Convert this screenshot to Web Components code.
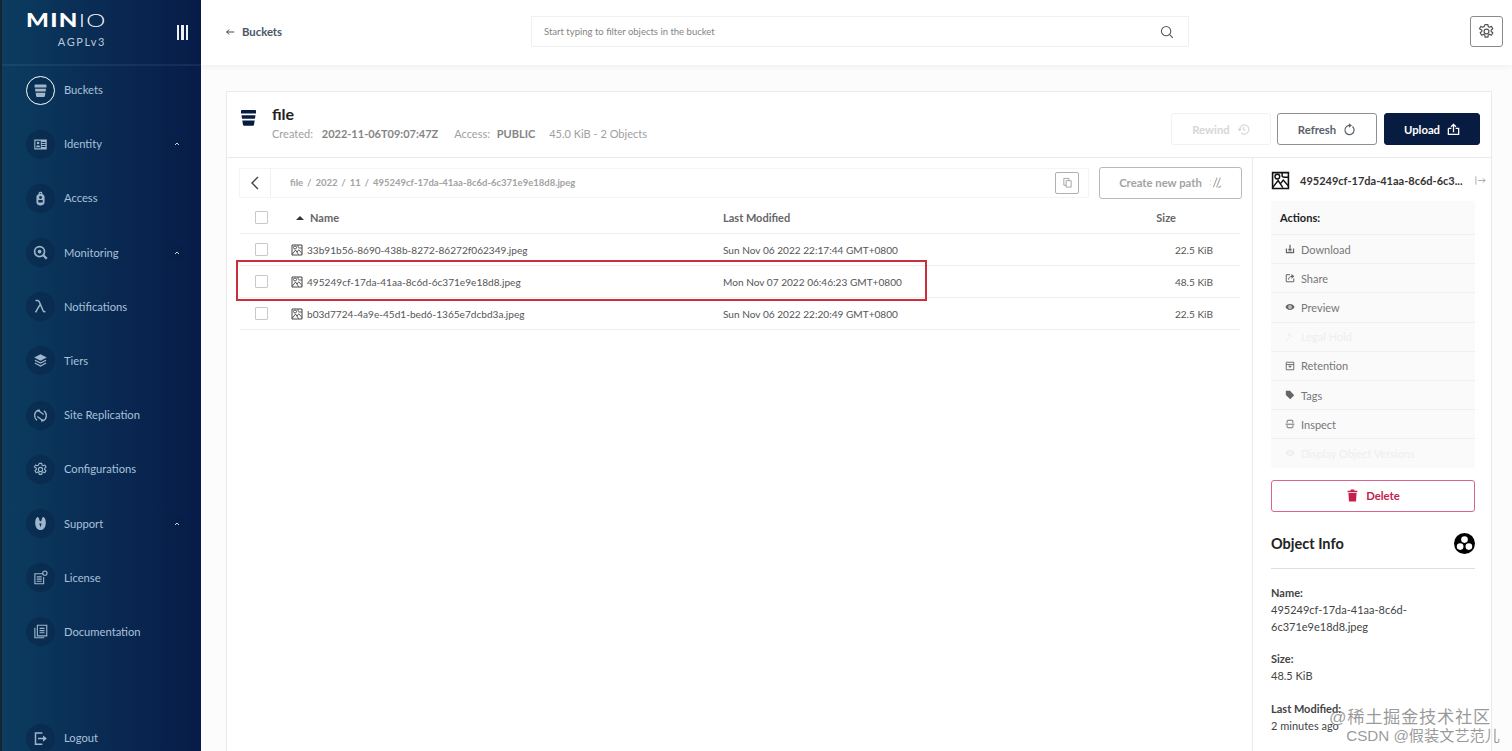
<!DOCTYPE html>
<html lang="en">
<head>
<meta charset="utf-8">
<title>MinIO Console</title>
<style>
  html, body { margin: 0; height: 100%; overflow: hidden; }
  body { font-family: Lato, "Noto Sans", sans-serif; }
</style>
</head>
<body>
<console-app></console-app>

<script>
// shared icons, all on a 24x24 box and drawn with currentColor
const ICONS = {
  bucket: '<path fill="currentColor" d="M3.5 2.500h17c.6 0 1 .4 1 1V7H2.500V3.500c0-.6.4-1 1-1zM3.200 9h17.600l-.6 4.700H3.800zM4.200 15.700h15.600l-.8 5c-.2 1-1 1.800-2 1.800H7c-1 0-1.800-.8-2-1.800z"/>',
  identity: '<path fill="currentColor" fill-rule="evenodd" d="M2 4h20v16H2zM3.800 6v12h8.700V6zM14 8v1.600h6V8zM14 11.200v1.600h6v-1.600zM14 14.400V16h6v-1.600z"/><circle cx="8.100" cy="9.500" r="2.100" fill="currentColor"/><path fill="currentColor" d="M4.800 16.500c0-2.300 1.500-3.500 3.300-3.500s3.300 1.200 3.300 3.500z"/>',
  access: '<path fill="currentColor" fill-rule="evenodd" d="M9 5V3.500C9 2 10.300 1 12 1s3 1 3 2.500V5c2 .5 3.500 2 3.500 4v9c0 2.800-2.500 5-6.500 5s-6.500-2.200-6.500-5V9c0-2 1.500-3.500 3.500-4zM11 3.800v.9h2v-.9c0-.5-2-.5-2 0zM12 8a2.300 2.300 0 100 4.600A2.300 2.300 0 0012 8zM8.500 14.500v4h7v-4z"/>',
  monitoring: '<g fill="none" stroke="currentColor" stroke-width="2.600"><circle cx="10.500" cy="10.500" r="8"/><path d="M16.500 16.500L22 22" stroke-width="3.600"/></g><circle cx="10.500" cy="10.500" r="3" fill="currentColor"/>',
  lambda: '<path fill="none" stroke="currentColor" stroke-width="2.400" d="M4 2.500h3.500c1.500 0 2 .7 2.700 2.300L16 18.500c.7 1.500 1.500 2 4 1.700M11 9.500L4 21.500"/>',
  tiers: '<path fill="currentColor" d="M12 2l10 5.200-10 5.200L2 7.200z"/><path fill="none" stroke="currentColor" stroke-width="2" d="M3 11.500l9 4.700 9-4.700M3 16l9 4.700 9-4.700"/>',
  replication: '<g fill="none" stroke="currentColor" stroke-width="2"><path d="M6.500 19.500A9.500 9.500 0 0 1 8 3.300"/><path d="M17.500 4.500a9.500 9.500 0 0 1-1.500 16.200"/><path d="M8 3.500l9 7M16 20.500l-9-7"/></g><path fill="currentColor" d="M10 1l1.500 5-5-.5zM14 23l-1.500-5 5 .5z"/>',
  gear: '<g fill="none" stroke="currentColor" stroke-width="1.700" stroke-linejoin="round"><circle cx="12" cy="12" r="3.400"/><path d="M10 2.200h4l.5 2.900 1.700.9 2.700-1.200 2 3.400-2.300 1.800v2l2.300 1.800-2 3.400-2.700-1.200-1.700.9-.5 2.900h-4l-.5-2.900-1.700-.9-2.700 1.200-2-3.400 2.300-1.800v-2L2.100 8.200l2-3.400 2.700 1.200 1.700-.9z"/></g>',
  support: '<path fill="currentColor" d="M7 1.500c1.500 0 2.500 1 3 4l1 3h2l1-3c.5-3 1.500-4 3-4 2.500 1.500 3.500 5 3.500 9.500 0 6-3.500 11.500-8.500 11.500S3.500 17 3.500 11C3.500 6.500 4.500 3 7 1.500z"/><path fill="#0a2f56" d="M10 12l2 6 2-6z"/>',
  license: '<g fill="none" stroke="currentColor" stroke-width="1.800"><path d="M16 6H3v16h14V11"/><path d="M6 11h8M6 14.500h8M6 18h8"/><circle cx="19" cy="5" r="3.400"/></g>',
  docs: '<g fill="none" stroke="currentColor" stroke-width="1.800"><path d="M7 2h15v17H7z"/><path d="M3 6v16h15"/><path d="M10.500 7h8M10.500 10.500h8M10.500 14h8"/></g>',
  logout: '<g fill="none" stroke="currentColor" stroke-width="2.400"><path d="M15 3H4v18h11"/><path d="M8 12h13"/></g><path fill="currentColor" d="M16 7l6 5-6 5z"/>',
  chevron: '<path fill="none" stroke="currentColor" stroke-width="3" d="M6 15l6-6 6 6"/>',
  search: '<g fill="none" stroke="currentColor" stroke-width="1.800"><circle cx="10.500" cy="10.500" r="8"/><path d="M16.500 16.500L22 22"/></g>',
  image: '<path fill="none" stroke="currentColor" stroke-width="2" d="M2 2h20v20H2z"/><circle cx="8" cy="7" r="3" fill="none" stroke="currentColor" stroke-width="1.800"/><path fill="none" stroke="currentColor" stroke-width="1.800" d="M2 21l7-9 6 9M12 16l3.500-4.500L22 19M14 2v3.500c0 1.500 1 2.500 3 2.500h5"/>',
  back: '<path fill="none" stroke="currentColor" stroke-width="2" d="M22 12H4M10 6l-6 6 6 6"/>',
  undo: '<path fill="none" stroke="currentColor" stroke-width="2" d="M5 12a8.500 8.500 0 1 1 3 6.500M12 7.500V12l3.500 2"/><path fill="currentColor" d="M1 10.500h8L5 15.500z"/>',
  refresh: '<path fill="none" stroke="currentColor" stroke-width="2.200" d="M17.500 6.500a8.500 8.500 0 1 1-6-2"/><path fill="currentColor" d="M11 .5l5.500 4.200L11 8.800z"/>',
  upload: '<path fill="none" stroke="currentColor" stroke-width="2.400" d="M2.500 10v11h19V10H16M8 10H2.500M12 17V3M7.500 7L12 2.500 16.500 7"/>',
  copy: '<g fill="none" stroke="currentColor" stroke-width="2"><path d="M4 3h11v15H4z"/><path d="M9 8h11v14H9z" fill="#fff"/></g>',
  newpath: '<path fill="none" stroke="currentColor" stroke-width="2" d="M2 9h1M2 16h1M8 21L15 3M14 21L21 3M17 21c2 0 4-1 5-3"/>',
  expand: '<path fill="none" stroke="currentColor" stroke-width="1.500" d="M2 3v18M7 12h15M17 7l5 5-5 5"/>',
  download: '<path fill="currentColor" d="M2 11h3v8h4v-8h1.500v8h3v-8H15v8h4v-8h3v11H2z"/><path fill="currentColor" d="M10.500 2h3v10H17l-5 5-5-5h3.500z"/>',
  share: '<path fill="none" stroke="currentColor" stroke-width="2.400" d="M21 13v8H3V4h9"/><path fill="none" stroke="currentColor" stroke-width="2.400" d="M8.500 16c0-5 3-8 9-8"/><path fill="currentColor" d="M15.500 2.500l7 5.500-7 5.500z"/>',
  eye: '<path fill="currentColor" fill-rule="evenodd" d="M12 5c5 0 9 3 11 7-2 4-6 7-11 7S3 16 1 12c2-4 6-7 11-7zm0 3a4 4 0 100 8 4 4 0 000-8z"/><circle cx="12" cy="12" r="2" fill="currentColor"/>',
  gavel: '<path fill="currentColor" d="M9 2l8 8-3 3-8-8zM11 14l-7 7-2-2 7-7z"/>',
  retention: '<path fill="none" stroke="currentColor" stroke-width="2.200" d="M3 3h18v18H3zM3 8.500h18"/><path fill="currentColor" d="M7.500 11.500h9L12 17z"/>',
  tag: '<path fill="currentColor" d="M2 2h10l10 10.500L12.500 22 2 12z"/>',
  inspect: '<path fill="none" stroke="currentColor" stroke-width="2.200" d="M5 10V5c0-1 1-2 2-2h10c1 0 2 1 2 2v5M5 15v4c0 1 1 2 2 2h10c1 0 2-1 2-2v-4M1.500 12.500h21"/>',
  trash: '<path fill="currentColor" d="M9 1h6l1 2h5v3H3V3h5zM4.500 7.500h15L18.500 23h-13z"/>',
  shares: '<circle cx="12" cy="12" r="12" fill="currentColor"/><g fill="#fff"><circle cx="12" cy="7.500" r="3.800"/><circle cx="7" cy="15.500" r="3.800"/><circle cx="17" cy="15.500" r="3.800"/></g>'
};

function icon(name, size) {
  return `<svg viewBox="0 0 24 24" width="${size}" height="${size}" aria-hidden="true">${ICONS[name]}</svg>`;
}

// one item of the left menu
class NavItem extends HTMLElement {
  connectedCallback() {
    let open = this.hasAttribute('chevron');
    this.attachShadow({mode: 'open'}).innerHTML = `
      <style>
        :host { display: flex; align-items: center; height: 30px; padding: 0 17px 0 24px; color: #a9c1da; font-size: 11.2px; }
        .disc { width: 29px; height: 29px; border-radius: 50%; background: rgba(8,32,66,.4); display: flex; align-items: center; justify-content: center; flex: none; margin-right: 9px; color: #9fb5cb; }
        :host([active]) .disc { box-sizing: border-box; border: 1.5px solid #fff; background: rgba(8,32,66,.3); color: #a3b6c9; }
        .label { flex: 1; margin-top: -1px; }
        .chev { width: 15px; height: 15px; border-radius: 50%; display: flex; align-items: center; justify-content: center; background: rgba(8,32,66,.4); color: #c8d6e3; }
      </style>
      <span class="disc">${icon(this.getAttribute('icon'), 15)}</span>
      <span class="label"><slot></slot></span>
      ${open ? `<span class="chev">${icon('chevron', 8)}</span>` : ''}
    `;
  }
}
customElements.define('nav-item', NavItem);

class SideBar extends HTMLElement {
  constructor() {
    super();
    this.attachShadow({mode: 'open'}).innerHTML = `
      <style>
        :host { display: flex; flex-direction: column; width: 201px; flex: none; height: 751px; box-sizing: border-box; overflow: hidden;
                border-left: 2px solid #16242f; background: linear-gradient(90deg, #0b3d60 0%, #0a2c54 45%, #071c48 100%); font-family: Lato, sans-serif; }
        header { height: 66px; flex: none; box-sizing: border-box; border-bottom: 2px solid rgba(90,130,170,.16); display: flex; justify-content: space-between; padding: 10px 13px 0 24px; color: #fff; }
        .logo { display: flex; flex-direction: column; width: 80px; }
        .word { font: 900 18.5px/20px Lato, sans-serif; letter-spacing: 1px; white-space: nowrap; transform: scaleX(1.3); transform-origin: left center; }
        .word span { font-weight: 300; }
        .lic { font-size: 11px; letter-spacing: 1.6px; color: #b9c8d8; text-align: right; margin-top: 5px; }
        .bars { display: flex; gap: 2px; margin-top: 15px; height: 15px; }
        .bars i { width: 2.5px; background: #eef2f6; }
        nav { display: flex; flex-direction: column; gap: 24.2px; padding-top: 9px; flex: 1; }
        ::slotted([slot=foot]) { margin-bottom: -2px; }
      </style>
      <header>
        <div class="logo">
          <div class="word">MIN<span>IO</span></div>
          <div class="lic">AGPLv3</div>
        </div>
        <div class="bars"><i></i><i></i><i></i></div>
      </header>
      <nav><slot></slot></nav>
      <slot name="foot"></slot>
    `;
  }
}
customElements.define('side-bar', SideBar);

class TopBar extends HTMLElement {
  constructor() {
    super();
    this.attachShadow({mode: 'open'}).innerHTML = `
      <style>
        :host { display: flex; align-items: center; height: 65px; flex: none; box-sizing: border-box; background: #fff; box-shadow: 0 2px 6px rgba(0,0,0,.05); padding: 0 9px 2px 24px; position: relative; }
        .back { display: flex; align-items: center; gap: 7px; width: 306px; font-size: 11.3px; font-weight: 700; color: #4a5666; flex: none; }
        .back svg { color: #222; }
        .filter { width: 658px; height: 31px; box-sizing: border-box; border: 1px solid #f0f0f0; display: flex; align-items: center; justify-content: space-between; padding: 0 14px 0 12px; font-size: 9.5px; color: #858585; }
        .filter svg { color: #555; }
        .spacer { flex: 1; }
        .gear { width: 33px; height: 31px; box-sizing: border-box; border: 1px solid #8a8a8a; border-radius: 3px; display: flex; align-items: center; justify-content: center; color: #555; }
      </style>
      <div class="back">${icon('back', 10)}<span>Buckets</span></div>
      <div class="filter"><span>Start typing to filter objects in the bucket</span>${icon('search', 14)}</div>
      <div class="spacer"></div>
      <div class="gear">${icon('gear', 17)}</div>
    `;
  }
}
customElements.define('top-bar', TopBar);

// bordered button, kind = plain | primary | faded | soft | danger
class ActionButton extends HTMLElement {
  connectedCallback() {
    this.attachShadow({mode: 'open'}).innerHTML = `
      <style>
        :host { display: flex; align-items: center; justify-content: center; gap: 7px; box-sizing: border-box; height: 32px; border: 1px solid #8f8f8f; border-radius: 3px; font-size: 11.3px; font-weight: 700; color: #59616b; background: #fff; flex: none; }
        :host([kind=primary]) { background: #081c42; border-color: #081c42; color: #fff; }
        :host([kind=faded]) { border-color: #f1f1f1; color: #d6d6d6; }
        :host([kind=soft]) { border-color: #b9b9b9; color: #a3a3a3; }
        :host([kind=danger]) { border-color: #d9658a; color: #c4214e; }
      </style>
      <span style="display:inline-flex;order:${this.hasAttribute('lead') ? 0 : 1}">${icon(this.getAttribute('icon'), +this.getAttribute('size') || 13)}</span>
      <span><slot></slot></span>
    `;
  }
}
customElements.define('action-button', ActionButton);

class BucketHeader extends HTMLElement {
  constructor() {
    super();
    this.attachShadow({mode: 'open'}).innerHTML = `
      <style>
        :host { display: flex; align-items: flex-start; height: 66px; flex: none; box-sizing: border-box; border-bottom: 1px solid #eaeaea; padding: 12px 11px 0 12px; }
        .ic { color: #081c42; width: 19px; margin: 4px 14px 0 0; display: flex; }
        .txt { flex: 1; }
        h1 { margin: 0; font-size: 16px; line-height: 20px; font-weight: 700; color: #222; }
        .meta { font-size: 11px; color: #a0a0a0; display: flex; gap: 14px; margin-top: 1px; line-height: 18px; }
        b { color: #858585; margin-left: 4px; font-weight: 700; }
        .created { margin-right: 2px; }
        .created b { margin-left: 6px; }
      </style>
      <div class="ic">${icon('bucket', 19)}</div>
      <div class="txt">
        <h1>file</h1>
        <div class="meta">
          <span class="created">Created: <b>2022-11-06T09:07:47Z</b></span>
          <span>Access: <b>PUBLIC</b></span>
          <span>45.0 KiB - 2 Objects</span>
        </div>
      </div>
      <div style="display:flex;gap:6px;margin-top:9px"><slot></slot></div>
    `;
  }
}
customElements.define('bucket-header', BucketHeader);

class PathBar extends HTMLElement {
  constructor() {
    super();
    this.attachShadow({mode: 'open'}).innerHTML = `
      <style>
        :host { display: flex; align-items: center; gap: 10px; padding: 8px 10px 0 12px; height: 41px; box-sizing: border-box; flex: none; }
        .bar { flex: 1; height: 30px; box-sizing: border-box; border: 1px solid #f4f4f4; display: flex; align-items: center; }
        .prev { width: 30px; height: 100%; border-right: 1px solid #f0f0f0; display: flex; align-items: center; justify-content: center; color: #444; flex: none; }
        .crumbs { flex: 1; padding-left: 19px; font-size: 9.5px; font-weight: 700; color: #a2a2a2; word-spacing: 1.6px; }
        .copy { width: 24px; height: 22px; box-sizing: border-box; margin-right: 9px; border: 1px solid #b0b0b0; border-radius: 2px; display: flex; align-items: center; justify-content: center; color: #a0a0a0; }
        action-button { width: 143px; }
      </style>
      <div class="bar">
        <div class="prev"><svg width="10" height="14" viewBox="0 0 10 14"><path d="M8 1L2 7l6 6" fill="none" stroke="currentColor" stroke-width="1.400"/></svg></div>
        <div class="crumbs">file / 2022 / 11 / 495249cf-17da-41aa-8c6d-6c371e9e18d8.jpeg</div>
        <div class="copy">${icon('copy', 11)}</div>
      </div>
      <action-button kind="soft" icon="newpath" size="13">Create new path</action-button>
    `;
  }
}
customElements.define('path-bar', PathBar);

const ROW_COLS = '51px 432px 1fr 130px';

class FileRow extends HTMLElement {
  connectedCallback() {
    this.attachShadow({mode: 'open'}).innerHTML = `
      <style>
        :host { display: grid; grid-template-columns: ${ROW_COLS}; align-items: center; height: 32px; box-sizing: border-box; border-bottom: 1px solid #eeeeee; font-size: 10.1px; color: #555; }
        .check { width: 13px; height: 13px; box-sizing: border-box; border: 1px solid #c8c8c8; border-radius: 1px; margin-left: 15px; background: #fff; }
        .name { display: flex; align-items: center; gap: 4px; }
        .name svg { color: #444; }
        .size { text-align: right; padding-right: 27px; }
      </style>
      <div class="check"></div>
      <div class="name">${icon('image', 12)}<span><slot></slot></span></div>
      <div>${this.getAttribute('modified')}</div>
      <div class="size">${this.getAttribute('size')}</div>
    `;
  }
}
customElements.define('file-row', FileRow);

class FileTable extends HTMLElement {
  constructor() {
    super();
    this.attachShadow({mode: 'open'}).innerHTML = `
      <style>
        :host { display: block; margin: 0 12px 0 13px; }
        .head { display: grid; grid-template-columns: ${ROW_COLS}; align-items: center; height: 35px; box-sizing: border-box; border-bottom: 1px solid #eeeeee; font-size: 11px; font-weight: 700; color: #666; padding-top: 3px; }
        .check { width: 13px; height: 13px; box-sizing: border-box; border: 1px solid #c8c8c8; border-radius: 1px; margin-left: 15px; }
        .name { display: flex; align-items: center; gap: 6px; padding-left: 5px; }
        .tri { width: 0; height: 0; border: 4px solid transparent; border-top: 0; border-bottom: 4px solid #333; }
        .size { text-align: right; padding-right: 64px; }
      </style>
      <div class="head">
        <div class="check"></div>
        <div class="name"><i class="tri"></i>Name</div>
        <div>Last Modified</div>
        <div class="size">Size</div>
      </div>
      <slot></slot>
    `;
  }
}
customElements.define('file-table', FileTable);

class ActionList extends HTMLElement {
  constructor() {
    super();
    this.attachShadow({mode: 'open'}).innerHTML = `
      <style>
        :host { display: block; background: #fafafa; border-radius: 2px; }
        .title { height: 33px; display: flex; align-items: center; padding-left: 9px; font-size: 11px; font-weight: 700; color: #222; }
      </style>
      <div class="title">Actions:</div>
      <slot></slot>
    `;
  }
}
customElements.define('action-list', ActionList);

class ActionRow extends HTMLElement {
  connectedCallback() {
    this.attachShadow({mode: 'open'}).innerHTML = `
      <style>
        :host { display: flex; align-items: center; gap: 6px; height: 29.2px; box-sizing: border-box; border-top: 1px solid #efefef; padding-left: 14px; font-size: 11px; color: #777; }
        :host([off]) { color: #eeeeee; }
        svg { color: #666; }
        :host([off]) svg { color: #eeeeee; }
      </style>
      ${icon(this.getAttribute('icon'), 10)}<span><slot></slot></span>
    `;
  }
}
customElements.define('action-row', ActionRow);

class InfoField extends HTMLElement {
  connectedCallback() {
    this.attachShadow({mode: 'open'}).innerHTML = `
      <style>
        :host { display: block; font-size: 11px; line-height: 17px; color: #444; margin-bottom: 15.5px; overflow-wrap: anywhere; }
        b { color: #444; display: block; font-weight: 700; }
      </style>
      <b>${this.getAttribute('label')}</b>
      <slot></slot>
    `;
  }
}
customElements.define('info-field', InfoField);

class DetailPanel extends HTMLElement {
  constructor() {
    super();
    this.attachShadow({mode: 'open'}).innerHTML = `
      <style>
        :host { display: block; width: 239px; flex: none; box-sizing: border-box; border-left: 1px solid #eaeaea; padding: 10px 16px 0 18px; }
        .name { display: flex; align-items: center; height: 24px; margin-bottom: 9px; font-size: 11px; font-weight: 700; color: #333; white-space: nowrap; }
        .name .pic { color: #111; margin-right: 10px; display: flex; }
        .name .txt { flex: 1; }
        .name .out { color: #888; display: flex; margin-right: -11px; }
        action-button { width: 100%; margin: 12px 0 0; }
        .info { display: flex; justify-content: space-between; align-items: center; height: 48px; padding-top: 8px; border-bottom: 1px solid #dedede; font-size: 14.5px; font-weight: 700; color: #222; margin-bottom: 15px; }
        .info svg { color: #000; }
      </style>
      <div class="name">
        <span class="pic">${icon('image', 19)}</span>
        <span class="txt">495249cf-17da-41aa-8c6d-6c3...</span>
        <span class="out">${icon('expand', 11)}</span>
      </div>
      <action-list>
        <action-row icon="download">Download</action-row>
        <action-row icon="share">Share</action-row>
        <action-row icon="eye">Preview</action-row>
        <action-row icon="gavel" off>Legal Hold</action-row>
        <action-row icon="retention">Retention</action-row>
        <action-row icon="tag">Tags</action-row>
        <action-row icon="inspect">Inspect</action-row>
        <action-row icon="eye" off>Display Object Versions</action-row>
      </action-list>
      <action-button kind="danger" icon="trash" size="13" lead>Delete</action-button>
      <div class="info"><span>Object Info</span>${icon('shares', 21)}</div>
      <info-field label="Name:">495249cf-17da-41aa-8c6d-6c371e9e18d8.jpeg</info-field>
      <info-field label="Size:">48.5 KiB</info-field>
      <info-field label="Last Modified:">2 minutes ago</info-field>
    `;
  }
}
customElements.define('detail-panel', DetailPanel);

class ConsoleApp extends HTMLElement {
  constructor() {
    super();
    this.attachShadow({mode: 'open'}).innerHTML = `
      <style>
        :host { display: flex; height: 751px; overflow: hidden; position: relative; font-family: Lato, sans-serif; background: #fcfcfc; }
        main { flex: 1; min-width: 0; display: flex; flex-direction: column; }
        .wrap { flex: 1; min-height: 0; padding: 26px 20px 0 25px; }
        .card { height: 100%; box-sizing: border-box; border: 1px solid #eaeaea; border-bottom: 0; background: #fff; display: flex; flex-direction: column; }
        .body { flex: 1; display: flex; min-height: 0; }
        .list { flex: 1; min-width: 0; display: flex; flex-direction: column; }
        /* annotation painted over the screenshot */
        .mark { position: absolute; left: 236px; top: 260px; width: 691px; height: 41px; box-sizing: border-box; border: 2px solid #c9303c; }
        .water { position: absolute; right: 21px; bottom: 6px; text-align: right; color: rgba(120,120,120,.75); font-family: "Liberation Sans", "Noto Sans CJK SC", sans-serif; white-space: nowrap; }
        .water div:first-child { font-size: 17.3px; line-height: 17px; letter-spacing: .7px; }
        .water div:last-child { font-size: 15.2px; line-height: 19px; margin-right: -9px; }
      </style>
      <side-bar>
        <nav-item icon="bucket" active>Buckets</nav-item>
        <nav-item icon="identity" chevron>Identity</nav-item>
        <nav-item icon="access">Access</nav-item>
        <nav-item icon="monitoring" chevron>Monitoring</nav-item>
        <nav-item icon="lambda">Notifications</nav-item>
        <nav-item icon="tiers">Tiers</nav-item>
        <nav-item icon="replication">Site Replication</nav-item>
        <nav-item icon="gear">Configurations</nav-item>
        <nav-item icon="support" chevron>Support</nav-item>
        <nav-item icon="license">License</nav-item>
        <nav-item icon="docs">Documentation</nav-item>
        <nav-item slot="foot" icon="logout">Logout</nav-item>
      </side-bar>
      <main>
        <top-bar></top-bar>
        <div class="wrap">
          <div class="card">
            <bucket-header>
              <action-button kind="faded" icon="undo" style="width:100px">Rewind</action-button>
              <action-button icon="refresh" style="width:100px">Refresh</action-button>
              <action-button kind="primary" icon="upload" style="width:96px;margin-left:1px">Upload</action-button>
            </bucket-header>
            <div class="body">
              <div class="list">
                <path-bar></path-bar>
                <file-table>
                  <file-row modified="Sun Nov 06 2022 22:17:44 GMT+0800" size="22.5 KiB">33b91b56-8690-438b-8272-86272f062349.jpeg</file-row>
                  <file-row modified="Mon Nov 07 2022 06:46:23 GMT+0800" size="48.5 KiB">495249cf-17da-41aa-8c6d-6c371e9e18d8.jpeg</file-row>
                  <file-row modified="Sun Nov 06 2022 22:20:49 GMT+0800" size="22.5 KiB">b03d7724-4a9e-45d1-bed6-1365e7dcbd3a.jpeg</file-row>
                </file-table>
              </div>
              <detail-panel></detail-panel>
            </div>
          </div>
        </div>
      </main>
      <div class="mark"></div>
      <div class="water">
        <div>@稀土掘金技术社区</div>
        <div>CSDN @假装文艺范儿</div>
      </div>
    `;
  }
}
customElements.define('console-app', ConsoleApp);
</script>
</body>
</html>
